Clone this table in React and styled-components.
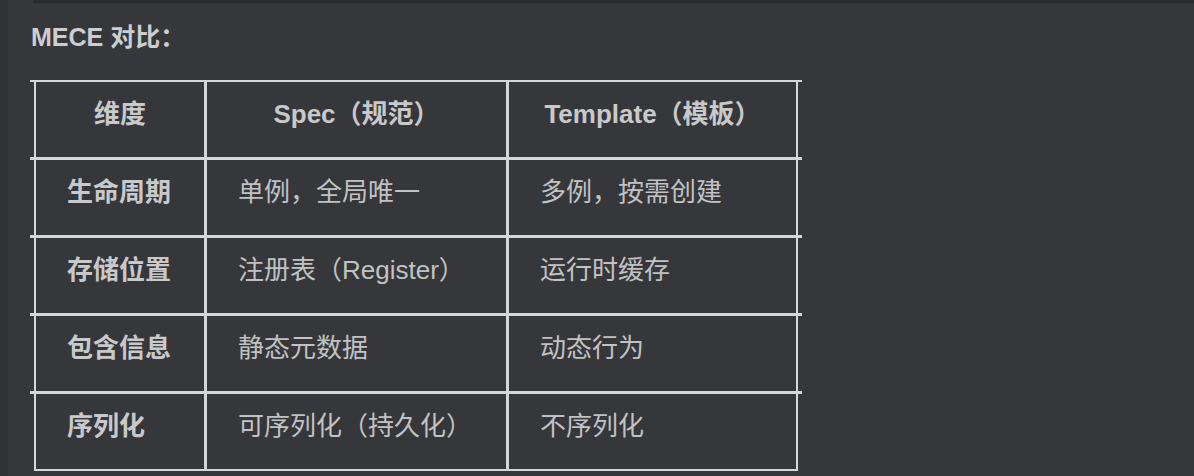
import React from "react";
import styled, { createGlobalStyle } from "styled-components";

const Global = createGlobalStyle`
  * { box-sizing: border-box; }
  html, body { margin: 0; padding: 0; background: #36373a; }
  body {
    font-family: "Liberation Sans", "Noto Sans CJK SC", sans-serif;
    -webkit-font-smoothing: antialiased;
  }
`;

const Page = styled.div`
  display: flex;
  width: 1194px;
  height: 476px;
  overflow: hidden;
  background: #36373a;
`;

const Gutter = styled.div`
  width: 8px;
  flex: none;
  background: #313235;
`;

const Main = styled.div`
  flex: 1;
  display: flex;
  flex-direction: column;
`;

const TopBar = styled.div`
  height: 3px;
  margin-left: 25px;
  background: #2a2b2e;
`;

const Heading = styled.div`
  margin: 16px 0 0 23px;
  font-size: 25px;
  line-height: 36px;
  font-weight: 700;
  color: #cdced0;
`;

const Table = styled.div`
  margin: 25px 0 0 26px;
  width: 764px;
  border-bottom: 2px solid #d3d7db;
`;

const Row = styled.div`
  display: grid;
  grid-template-columns: 173px 302px 289px;
  margin: 0 -4px;
  padding: 0 4px;
  border-top: ${(p) => (p.$first ? "2px" : "3px")} solid #d3d7db;
`;

const Cell = styled.div`
  height: 75px;
  display: flex;
  align-items: center;
  justify-content: ${(p) => (p.$center ? "center" : "flex-start")};
  padding: 0 ${(p) => (p.$center ? "0" : "31px")} 17px;
  border-right: ${(p) => (p.$last ? "2px" : "3px")} solid #d3d7db;
  border-left: ${(p) => (p.$firstCol ? "2px solid #d3d7db" : "none")};
  font-size: 26px;
  font-weight: ${(p) => (p.$bold ? 700 : 400)};
  color: ${(p) => (p.$bold ? "#c8c9cb" : "#c1c2c4")};
  white-space: nowrap;
`;

const header = ["维度", "Spec（规范）", "Template（模板）"];
const rows = [
  ["生命周期", "单例，全局唯一", "多例，按需创建"],
  ["存储位置", "注册表（Register）", "运行时缓存"],
  ["包含信息", "静态元数据", "动态行为"],
  ["序列化", "可序列化（持久化）", "不序列化"],
];

export default function App() {
  return (
    <>
      <Global />
      <Page>
        <Gutter />
        <Main>
          <TopBar />
          <Heading>MECE 对比：</Heading>
          <Table>
            <Row $first>
              {header.map((h, i) => (
                <Cell key={i} $center $bold $firstCol={i === 0} $last={i === 2}>
                  {h}
                </Cell>
              ))}
            </Row>
            {rows.map((r, ri) => (
              <Row key={ri}>
                {r.map((c, i) => (
                  <Cell key={i} $bold={i === 0} $firstCol={i === 0} $last={i === 2}>
                    {c}
                  </Cell>
                ))}
              </Row>
            ))}
          </Table>
        </Main>
      </Page>
    </>
  );
}
